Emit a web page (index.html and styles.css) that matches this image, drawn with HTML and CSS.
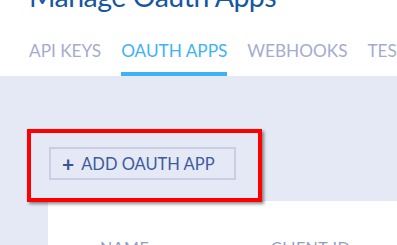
FILE: index.html
```html
<!DOCTYPE html>
<html>
<head>
<meta charset="utf-8">
<link rel="stylesheet" href="styles.css">
</head>
<body>
<header class="page-head">
  <h1 class="title">Manage Oauth Apps</h1>
  <nav class="tabs">
    <a class="tab">API KEYS</a>
    <a class="tab active">OAUTH APPS</a>
    <a class="tab">WEBHOOKS</a>
    <a class="tab">TESTING</a>
  </nav>
</header>
<main class="content">
  <div class="toolbar">
    <button class="add-btn"><span class="plus">+</span>ADD OAUTH APP</button>
    <span class="highlight"></span>
  </div>
  <section class="card">
    <div class="thead">
      <span class="col-name">NAME</span>
      <span class="col-id">CLIENT ID</span>
    </div>
  </section>
</main>
</body>
</html>
```
FILE: styles.css
```css
html, body {
  margin: 0;
  padding: 0;
  background: #ffffff;
  overflow: hidden;
  font-family: "Lato", "Open Sans", sans-serif;
}
.page-head {
  padding-left: 29px;
  background: #ffffff;
}
.title {
  margin: -20px 0 0 0;
  font-size: 28.5px;
  line-height: 32px;
  font-weight: 400;
  color: #1656a3;
  white-space: nowrap;
  letter-spacing: -0.5px;
}
.tabs {
  display: flex;
  gap: 20px;
  margin-top: 29px;
  white-space: nowrap;
}
.tab {
  display: block;
  font-size: 17.2px;
  line-height: 20px;
  color: #a5abcf;
  padding-bottom: 11px;
  border-bottom: 4px solid transparent;
}
.tab.active {
  color: #3db3f6;
  border-bottom-color: #3db3f6;
}
.content {
  background: #e5e9f5;
  padding: 71px 0 0 48px;
  height: 200px;
}
.toolbar {
  position: relative;
  display: flex;
  width: max-content;
  margin-left: 1px;
}
.add-btn {
  display: flex;
  align-items: center;
  height: 33px;
  width: 187px;
  padding: 0 0 0 11px;
  background: transparent;
  border: 2px solid #c9cee2;
  font-family: inherit;
  font-size: 16.5px;
  color: #3e5a9e;
  white-space: nowrap;
}
.plus {
  font-size: 21px;
  font-weight: 700;
  margin-right: 7px;
  color: #3b5596;
}
.highlight {
  position: absolute;
  left: -22px;
  top: -18px;
  right: -26px;
  bottom: -22px;
  border: 4px solid #ff0000;
  box-shadow: 2px 2px 3px rgba(0, 0, 0, 0.45);
  pointer-events: none;
}
.card {
  margin-top: 21px;
  background: #ffffff;
  height: 100px;
}
.thead {
  display: flex;
  padding: 36px 0 0 52px;
  font-size: 16px;
  color: #8f9cc8;
  letter-spacing: 0.5px;
}
.col-name {
  width: 171px;
}
```
